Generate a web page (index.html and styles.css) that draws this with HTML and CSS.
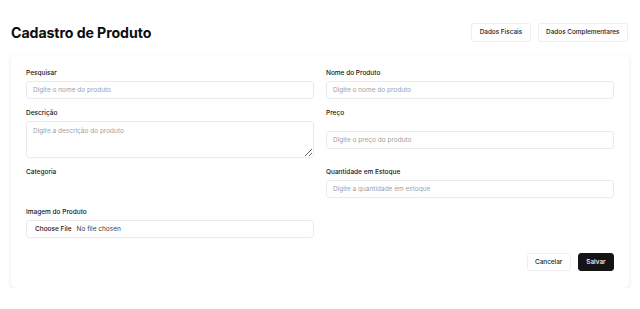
FILE: index.html
```html
<!DOCTYPE html>
<html lang="pt-BR">
<head>
<meta charset="utf-8">
<title>Cadastro de Produto</title>
<link rel="stylesheet" href="styles.css">
</head>
<body>
<div class="page">
  <header class="header">
    <h1 class="title">Cadastro de Produto</h1>
    <div class="tabs">
      <button class="btn btn-outline" type="button">Dados Fiscais</button>
      <button class="btn btn-outline" type="button">Dados Complementares</button>
    </div>
  </header>
  <form class="card">
    <div class="grid">
      <div class="field">
        <label class="label">Pesquisar</label>
        <input class="input" type="text" placeholder="Digite o nome do produto">
      </div>
      <div class="field">
        <label class="label">Nome do Produto</label>
        <input class="input" type="text" placeholder="Digite o nome do produto">
      </div>
      <div class="field">
        <label class="label">Descrição</label>
        <textarea class="input textarea" placeholder="Digite a descrição do produto"></textarea>
      </div>
      <div class="field">
        <label class="label">Preço</label>
        <div class="control-center">
          <input class="input" type="text" placeholder="Digite o preço do produto">
        </div>
      </div>
      <div class="field">
        <label class="label">Categoria</label>
      </div>
      <div class="field">
        <label class="label">Quantidade em Estoque</label>
        <input class="input" type="text" placeholder="Digite a quantidade em estoque">
      </div>
      <div class="field">
        <label class="label">Imagem do Produto</label>
        <input class="input file" type="file">
      </div>
    </div>
    <div class="actions">
      <button class="btn btn-outline btn-sm" type="button">Cancelar</button>
      <button class="btn btn-dark btn-sm" type="button">Salvar</button>
    </div>
  </form>
</div>
</body>
</html>
```
FILE: styles.css
```css
* { box-sizing: border-box; }

html, body {
  margin: 0;
  background: #ffffff;
  font-family: Inter, "Liberation Sans", sans-serif;
  color: #111114;
}

.page {
  padding: 23px 11px 0 11px;
}

.header {
  display: flex;
  justify-content: space-between;
  align-items: center;
  height: 19px;
}

.title {
  margin: 0;
  font-size: 14.2px;
  font-weight: 700;
  letter-spacing: -0.1px;
  line-height: 19px;
  color: #0d0d10;
}

.tabs {
  display: flex;
  gap: 7px;
  margin-right: 1px;
}

.btn {
  font-family: Inter, "Liberation Sans", sans-serif;
  font-size: 6.4px;
  font-weight: 500;
  height: 19px;
  padding: 0 7.5px;
  border-radius: 3px;
  cursor: pointer;
  line-height: 1;
}

.btn-outline {
  background: #ffffff;
  color: #18181b;
  border: 1px solid #eeeef0;
}

.btn-dark {
  background: #141416;
  color: #ffffff;
  border: 1px solid #141416;
}

.btn-sm {
  height: 18px;
}

.card {
  display: block;
  margin: 13px 0 0 0;
  padding: 14px 15px 17px 15px;
  border-radius: 5px;
  background: #ffffff;
  box-shadow: 0 2px 5px rgba(0, 0, 0, 0.09), 0 0 1px rgba(0, 0, 0, 0.05);
}

.grid {
  display: grid;
  grid-template-columns: 1fr 1fr;
  column-gap: 12px;
  row-gap: 10px;
}

.field {
  display: flex;
  flex-direction: column;
}

.label {
  display: block;
  font-size: 6.5px;
  font-weight: 500;
  line-height: 9px;
  margin-bottom: 3px;
  color: #141417;
}

.input {
  width: 100%;
  height: 18px;
  margin: 0;
  padding: 0 6px;
  border: 1px solid #ebebee;
  border-radius: 3px;
  background: #ffffff;
  font-family: Inter, "Liberation Sans", sans-serif;
  font-size: 6.5px;
  color: #17171a;
  outline: none;
}

.input::placeholder {
  color: #a0a0a6;
}

.textarea {
  height: 37px;
  padding: 5px 6px;
  resize: vertical;
  display: block;
}

.control-center {
  flex: 1;
  display: flex;
  align-items: center;
}

.file {
  padding: 0 4px;
  line-height: 16px;
  color: #3a3a40;
}

.file::file-selector-button {
  font-family: Inter, "Liberation Sans", sans-serif;
  font-size: 6.5px;
  font-weight: 500;
  color: #17171a;
  background: transparent;
  border: 0;
  padding: 0 4px 0 4px;
  margin-right: 1px;
  height: 16px;
}

.actions {
  display: flex;
  justify-content: flex-end;
  gap: 7px;
  margin-top: 15px;
}
```
